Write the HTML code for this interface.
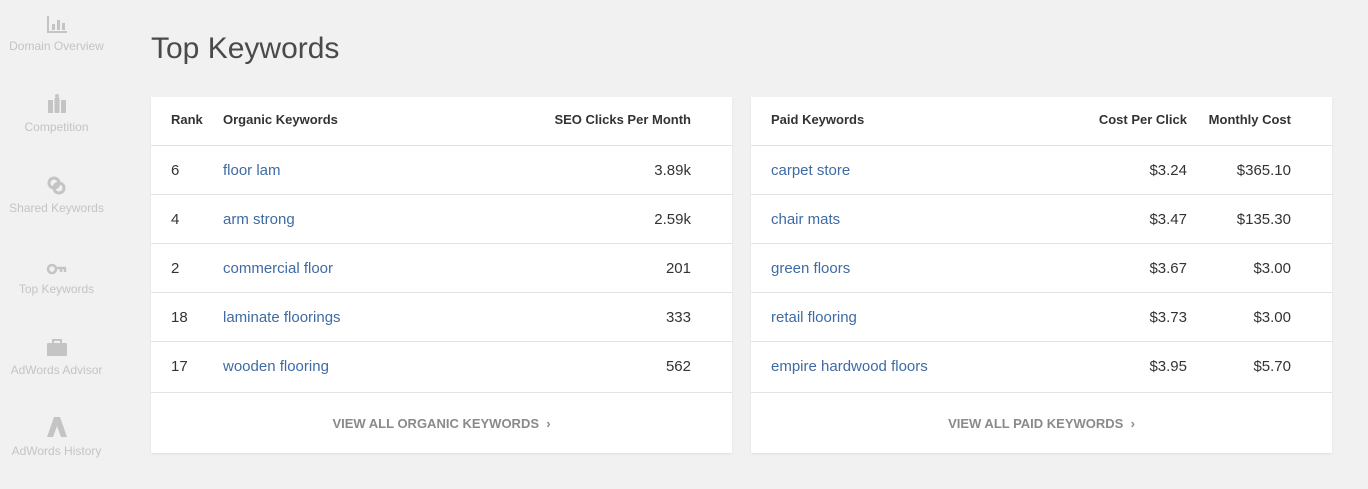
<!DOCTYPE html>
<html><head><style>
body{margin:0;width:1368px;height:489px;background:#f1f1f1;font-family:"Liberation Sans",sans-serif;position:relative;overflow:hidden}
.s{position:absolute;left:0;width:113px;text-align:center;color:#c4c4c4;font-size:12px}
.s svg{display:block;margin:0 auto 6px}
h1{position:absolute;left:151px;top:32px;margin:0;font-weight:normal;font-size:30px;color:#4a4a4a}
.card{position:absolute;top:97px;height:356px;background:#fff;box-shadow:0 1px 2px rgba(0,0,0,.08)}
.t{position:absolute;font-size:15px;color:#333;line-height:16px}
.h{font-weight:bold;color:#333;font-size:13px}
.a{color:#3f6ba3}
.r{text-align:right}
.line{position:absolute;left:0;right:0;height:1px;background:#e3e3e3}
.f{position:absolute;left:0;right:0;top:319px;text-align:center;color:#8a8a8a;font-size:13px;font-weight:bold}
</style></head><body>
<div class="s" style="top:15px"><svg width="22" height="18"><path d="M2 1v16h19" stroke="#c4c4c4" stroke-width="2" fill="none"/><rect x="6" y="9" width="3" height="6" fill="#c4c4c4"/><rect x="11" y="5" width="3" height="10" fill="#c4c4c4"/><rect x="16" y="8" width="3" height="7" fill="#c4c4c4"/></svg>Domain Overview</div>
<div class="s" style="top:94px"><svg width="20" height="20"><rect x="1" y="6" width="5" height="13" fill="#c4c4c4"/><rect x="7.5" y="4" width="5" height="15" fill="#c4c4c4"/><rect x="14" y="6" width="5" height="13" fill="#c4c4c4"/><circle cx="10" cy="2" r="2" fill="#c4c4c4"/></svg>Competition</div>
<div class="s" style="top:175px"><svg width="22" height="20"><circle cx="8" cy="8" r="5" stroke="#c4c4c4" stroke-width="3" fill="none"/><circle cx="13" cy="13" r="5" stroke="#c4c4c4" stroke-width="3" fill="none"/></svg>Shared Keywords</div>
<div class="s" style="top:262px"><svg width="22" height="14"><circle cx="6" cy="7" r="4" stroke="#c4c4c4" stroke-width="2.5" fill="none"/><path d="M10 6h10M15 6v4M19 6v4" stroke="#c4c4c4" stroke-width="2.5"/></svg>Top Keywords</div>
<div class="s" style="top:339px"><svg width="22" height="18"><rect x="1" y="4" width="20" height="13" rx="1" fill="#c4c4c4"/><rect x="7" y="1" width="8" height="4" stroke="#c4c4c4" stroke-width="2" fill="none"/></svg>AdWords Advisor</div>
<div class="s" style="top:416px"><svg width="22" height="22"><path d="M8 1h6l7 20h-6l-4-11-4 11H1z" fill="#c4c4c4"/></svg>AdWords History</div>
<h1>Top Keywords</h1>
<div class="card" style="left:151px;width:581px">
<div class="t h" style="left:20px;top:15px">Rank</div>
<div class="t h" style="left:72px;top:15px">Organic Keywords</div>
<div class="t h r" style="right:41px;top:15px">SEO Clicks Per Month</div>
<div class="line" style="top:48px"></div><div class="line" style="top:97px"></div><div class="line" style="top:146px"></div><div class="line" style="top:195px"></div><div class="line" style="top:244px"></div><div class="line" style="top:295px"></div>
<div class="t" style="left:20px;top:66px">6</div><div class="t a" style="left:72px;top:66px">floor lam</div><div class="t r" style="right:41px;top:66px">3.89k</div>
<div class="t" style="left:20px;top:115px">4</div><div class="t a" style="left:72px;top:115px">arm strong</div><div class="t r" style="right:41px;top:115px">2.59k</div>
<div class="t" style="left:20px;top:164px">2</div><div class="t a" style="left:72px;top:164px">commercial floor</div><div class="t r" style="right:41px;top:164px">201</div>
<div class="t" style="left:20px;top:213px">18</div><div class="t a" style="left:72px;top:213px">laminate floorings</div><div class="t r" style="right:41px;top:213px">333</div>
<div class="t" style="left:20px;top:262px">17</div><div class="t a" style="left:72px;top:262px">wooden flooring</div><div class="t r" style="right:41px;top:262px">562</div>
<div class="f">VIEW ALL ORGANIC KEYWORDS &nbsp;›</div>
</div>
<div class="card" style="left:751px;width:581px">
<div class="t h" style="left:20px;top:15px">Paid Keywords</div>
<div class="t h r" style="right:145px;top:15px">Cost Per Click</div>
<div class="t h r" style="right:41px;top:15px">Monthly Cost</div>
<div class="line" style="top:48px"></div><div class="line" style="top:97px"></div><div class="line" style="top:146px"></div><div class="line" style="top:195px"></div><div class="line" style="top:244px"></div><div class="line" style="top:295px"></div>
<div class="t a" style="left:20px;top:66px">carpet store</div><div class="t r" style="right:145px;top:66px">$3.24</div><div class="t r" style="right:41px;top:66px">$365.10</div>
<div class="t a" style="left:20px;top:115px">chair mats</div><div class="t r" style="right:145px;top:115px">$3.47</div><div class="t r" style="right:41px;top:115px">$135.30</div>
<div class="t a" style="left:20px;top:164px">green floors</div><div class="t r" style="right:145px;top:164px">$3.67</div><div class="t r" style="right:41px;top:164px">$3.00</div>
<div class="t a" style="left:20px;top:213px">retail flooring</div><div class="t r" style="right:145px;top:213px">$3.73</div><div class="t r" style="right:41px;top:213px">$3.00</div>
<div class="t a" style="left:20px;top:262px">empire hardwood floors</div><div class="t r" style="right:145px;top:262px">$3.95</div><div class="t r" style="right:41px;top:262px">$5.70</div>
<div class="f">VIEW ALL PAID KEYWORDS &nbsp;›</div>
</div>
</body></html>
